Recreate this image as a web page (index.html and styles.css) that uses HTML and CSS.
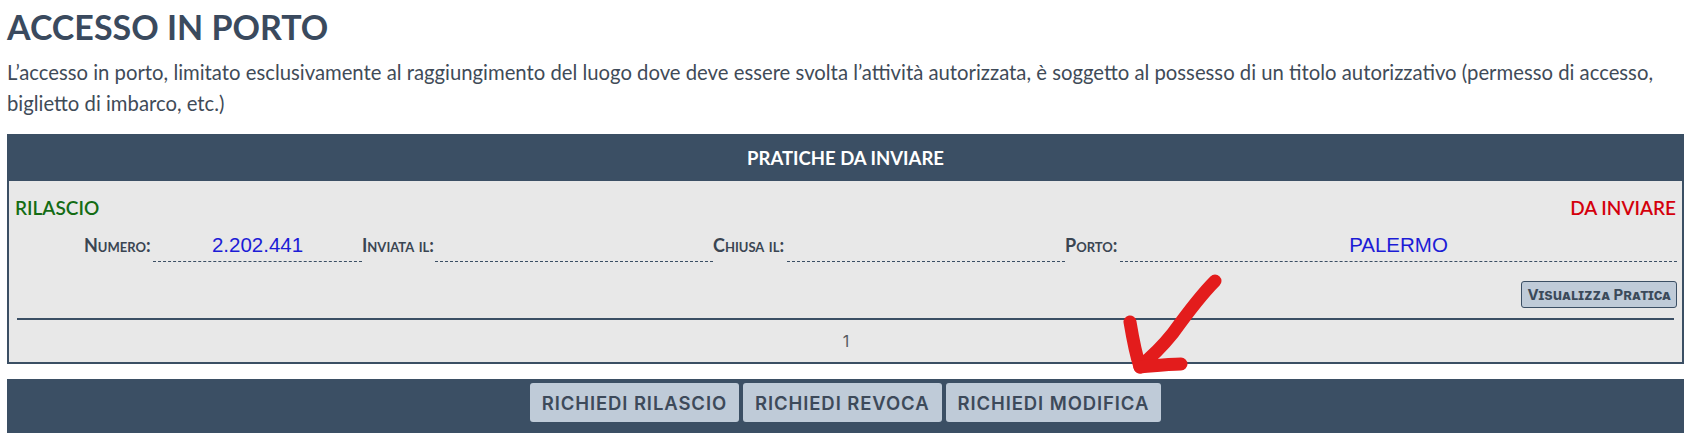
FILE: index.html
```html
<!DOCTYPE html>
<html lang="it">
<head>
<meta charset="utf-8">
<title>Accesso in porto</title>
<link rel="stylesheet" href="styles.css">
</head>
<body>
<div class="page">
  <h1 class="title">ACCESSO IN PORTO</h1>
  <p class="intro">L’accesso in porto, limitato esclusivamente al raggiungimento del luogo dove deve essere svolta l’attività autorizzata, è soggetto al possesso di un titolo autorizzativo (permesso di accesso, biglietto di imbarco, etc.)</p>

  <section class="panel">
    <div class="panel-head">PRATICHE DA INVIARE</div>
    <div class="panel-body">
      <div class="status-row">
        <span class="type">RILASCIO</span>
        <span class="state">DA INVIARE</span>
      </div>
      <div class="fields">
        <span class="label">Numero:</span>
        <span class="value">2.202.441</span>
        <span class="label">Inviata il:</span>
        <span class="value"></span>
        <span class="label">Chiusa il:</span>
        <span class="value"></span>
        <span class="label">Porto:</span>
        <span class="value">PALERMO</span>
      </div>
      <div class="actions">
        <button class="btn-view" type="button">Visualizza Pratica</button>
      </div>
      <hr class="rule">
      <div class="pager">1</div>
    </div>
  </section>

  <div class="bar">
    <button class="btn" type="button">RICHIEDI RILASCIO</button>
    <button class="btn" type="button">RICHIEDI REVOCA</button>
    <button class="btn" type="button">RICHIEDI MODIFICA</button>
  </div>
</div>

<svg class="annotation" width="1688" height="433" viewBox="0 0 1688 433" aria-hidden="true">
  <g fill="none" stroke="#e31c1c" stroke-width="13" stroke-linecap="round" stroke-linejoin="round">
    <path d="M1215 281 C1200 296 1186 315 1173 333 C1161 348 1149 359 1140 366"/>
    <path d="M1130 322 C1133 340 1136 355 1140 367"/>
    <path d="M1140 367 C1152 366 1168 364 1181 364"/>
  </g>
</svg>
</body>
</html>
```

FILE: styles.css
```css
* { box-sizing: border-box; }

body {
  margin: 0;
  position: relative;
  background: #ffffff;
  font-family: "Lato", "Noto Sans", sans-serif;
  color: #3d4a58;
  overflow: hidden;
}

.page {
  margin-left: 7px;
  width: 1677px;
}

.title {
  margin: 6px 0 0;
  font-size: 34px;
  line-height: 42px;
  font-weight: 700;
  color: #3a4a5e;
}

.intro {
  margin: 9px 0 0;
  font-size: 20.3px;
  line-height: 31px;
  color: #3f4b58;
}

.panel {
  margin-top: 15px;
}

.panel-head {
  height: 47px;
  padding-top: 1px;
  background: #3b4f64;
  color: #ffffff;
  display: flex;
  align-items: center;
  justify-content: center;
  font-size: 18.5px;
  font-weight: 700;
}

.panel-body {
  background: #e8e8e8;
  border: 2px solid #3b4f64;
  border-top: 0;
  padding: 15px 5px 0 6px;
}

.status-row {
  display: flex;
  justify-content: space-between;
  font-size: 19px;
  line-height: 24px;
  font-weight: 600;
}

.type { color: #146c14; }
.state { color: #d4000c; margin-right: 1px; }

.fields {
  display: grid;
  grid-template-columns: 69px 209px 73px 278px 74px 278px 55px 1fr;
  margin: 13px 0 0 69px;
}

.label {
  font-size: 18px;
  line-height: 24px;
  padding-bottom: 5px;
  font-weight: 700;
  font-variant: small-caps;
  white-space: nowrap;
  color: #3a4552;
}

.value {
  font-family: "Liberation Sans", Arial, sans-serif;
  font-size: 20.5px;
  line-height: 24px;
  height: 29px;
  padding-bottom: 4px;
  border-bottom: 1px dashed #3b4f64;
  text-align: center;
  color: #1c1cd6;
}

.actions {
  display: flex;
  justify-content: flex-end;
  margin-top: 19px;
}

.btn-view {
  height: 27px;
  padding: 0 5px;
  background: #bfcbd8;
  border: 1px solid #3b4f64;
  border-radius: 3px;
  font-family: "Inter", "Open Sans", sans-serif;
  font-size: 15px;
  font-weight: 700;
  font-variant: small-caps;
  color: #3b4a5a;
}

.rule {
  margin: 10px 3px 0 2px;
  height: 2px;
  border: 0;
  background: #3b4f64;
}

.pager {
  height: 42px;
  line-height: 42px;
  text-align: center;
  font-family: "Inter", "Open Sans", sans-serif;
  font-size: 16px;
  font-weight: 400;
  color: #555a60;
}

.bar {
  margin-top: 15px;
  padding: 4px 0 12px;
  background: #3b4f64;
  display: flex;
  justify-content: center;
  gap: 4px;
}

.btn {
  height: 39px;
  padding: 0 12px;
  background: #bfcbd8;
  border: 0;
  border-radius: 3px;
  font-family: "Inter", "Open Sans", sans-serif;
  font-size: 18.5px;
  font-weight: 600;
  letter-spacing: 0.9px;
  color: #3d4a5a;
}

.annotation {
  position: absolute;
  left: 0;
  top: 0;
  pointer-events: none;
}
```
